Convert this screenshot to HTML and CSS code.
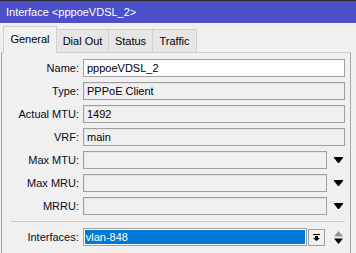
FILE: index.html
```html
<!DOCTYPE html>
<html>
<head>
<meta charset="utf-8">
<link rel="stylesheet" href="styles.css">
</head>
<body>
<div class="titlebar">Interface &lt;pppoeVDSL_2&gt;</div>
<div class="tabs">
  <div class="tab active">General</div>
  <div class="tab">Dial Out</div>
  <div class="tab">Status</div>
  <div class="tab">Traffic</div>
</div>
<div class="panel">
  <div class="rows">
    <div class="row"><span class="label">Name:</span><span class="field white">pppoeVDSL_2</span></div>
    <div class="row"><span class="label">Type:</span><span class="field">PPPoE Client</span></div>
    <div class="row"><span class="label">Actual MTU:</span><span class="field">1492</span></div>
    <div class="row"><span class="label">VRF:</span><span class="field">main</span></div>
    <div class="row"><span class="label">Max MTU:</span><span class="field short"></span><span class="arrow"><svg width="9" height="6" viewBox="0 0 9 6"><path d="M0 0h9v1l-4 5h-1l-4-5z" fill="#000"/></svg></span></div>
    <div class="row"><span class="label">Max MRU:</span><span class="field short"></span><span class="arrow"><svg width="9" height="6" viewBox="0 0 9 6"><path d="M0 0h9v1l-4 5h-1l-4-5z" fill="#000"/></svg></span></div>
    <div class="row"><span class="label">MRRU:</span><span class="field short"></span><span class="arrow"><svg width="9" height="6" viewBox="0 0 9 6"><path d="M0 0h9v1l-4 5h-1l-4-5z" fill="#000"/></svg></span></div>
  </div>
  <div class="sep"></div>
  <div class="row iface">
    <span class="label">Interfaces:</span>
    <span class="combo"><span class="sel">vlan-848</span></span>
    <span class="btn"><svg width="7" height="7" viewBox="0 0 7 7"><rect x="0" y="0" width="7" height="1" fill="#000"/><path d="M2 2h3v2h2l-3.5 3l-3.5-3h2z" fill="#000"/></svg></span>
    <span class="spin"><svg width="9" height="13" viewBox="0 0 9 13"><path d="M4.5 0l4.5 5.5h-9z" fill="#8a968a"/><path d="M0 7.5h9l-4.5 5.5z" fill="#000"/></svg></span>
  </div>
</div>
</body>
</html>
```
FILE: styles.css
```css
html, body {
  margin: 0;
  padding: 0;
}
body {
  width: 356px;
  height: 253px;
  overflow: hidden;
  background: #f0f0f0;
  font-family: "Liberation Sans", Arial, sans-serif;
  font-size: 11px;
  color: #000;
}
.titlebar {
  height: 22px;
  border-top: 1px solid #2c2c2c;
  background: #4b50c9;
  color: #fff;
  line-height: 22px;
  padding-left: 6px;
  font-size: 11px;
}
.tabs {
  display: flex;
  align-items: flex-end;
  padding-left: 3px;
  margin-top: 3px;
  height: 26px;
  position: relative;
  z-index: 1;
}
.tab {
  box-sizing: border-box;
  height: 23px;
  border: 1px solid #d0d0d0;
  border-bottom: none;
  background: #e6e6e6;
  line-height: 22px;
  padding: 0 8px;
}
.tab.active {
  height: 27px;
  background: #f0f0f0;
  border-color: #d0d0d0;
  width: 54px;
  padding: 0;
  text-align: center;
  line-height: 25px;
  margin-bottom: -1px;
}
.tab:nth-child(2) { width: 52px; padding: 0; text-align: center; border-left: none; }
.tab:nth-child(3) { width: 44px; padding: 0; text-align: center; border-left: none; }
.tab:nth-child(4) { width: 44px; padding: 0; text-align: center; border-left: none; }
.panel {
  margin-left: 1px;
  width: 350px;
  box-sizing: border-box;
  border: 1px solid #a8a8a8;
  border-top-color: #d0d0d0;
  border-bottom: none;
  height: 210px;
  padding-top: 6px;
}
.rows {
  display: grid;
  row-gap: 5px;
}
.row {
  display: flex;
  align-items: center;
  height: 18px;
}
.label {
  width: 77px;
  text-align: right;
  margin-right: 4px;
  color: #0a0a1e;
}
.field {
  box-sizing: border-box;
  width: 262px;
  height: 18px;
  border: 1px solid #a0a0a0;
  box-shadow: inset 1px 1px 0 #e3e3e3;
  background: #f0f0f0;
  padding-left: 3px;
  line-height: 16px;
}
.field.white {
  background: #fff;
  box-shadow: none;
}
.field.short {
  width: 244px;
}
.arrow {
  width: 20px;
  display: flex;
  justify-content: center;
  padding-left: 2px;
  box-sizing: border-box;
}
.arrow svg { display: block; }
.sep {
  height: 1px;
  background: #c8c8c8;
  margin: 6px 5px 6px 9px;
}
.combo {
  box-sizing: border-box;
  width: 225px;
  height: 18px;
  border: 1px solid #a0a0a0;
  background: #fff;
  padding: 1px;
  display: flex;
}
.sel {
  flex: 1;
  background: #0078d7;
  color: #fff;
  line-height: 14px;
  padding-left: 1px;
}
.btn {
  box-sizing: border-box;
  width: 17px;
  height: 17px;
  border: 1px solid #a0a0a0;
  margin-left: 1px;
  display: flex;
  align-items: center;
  justify-content: center;
}
.btn svg { display: block; }
.spin {
  width: 25px;
  display: flex;
  justify-content: center;
  padding-left: 2px;
  box-sizing: border-box;
}
.spin svg { display: block; }
```
